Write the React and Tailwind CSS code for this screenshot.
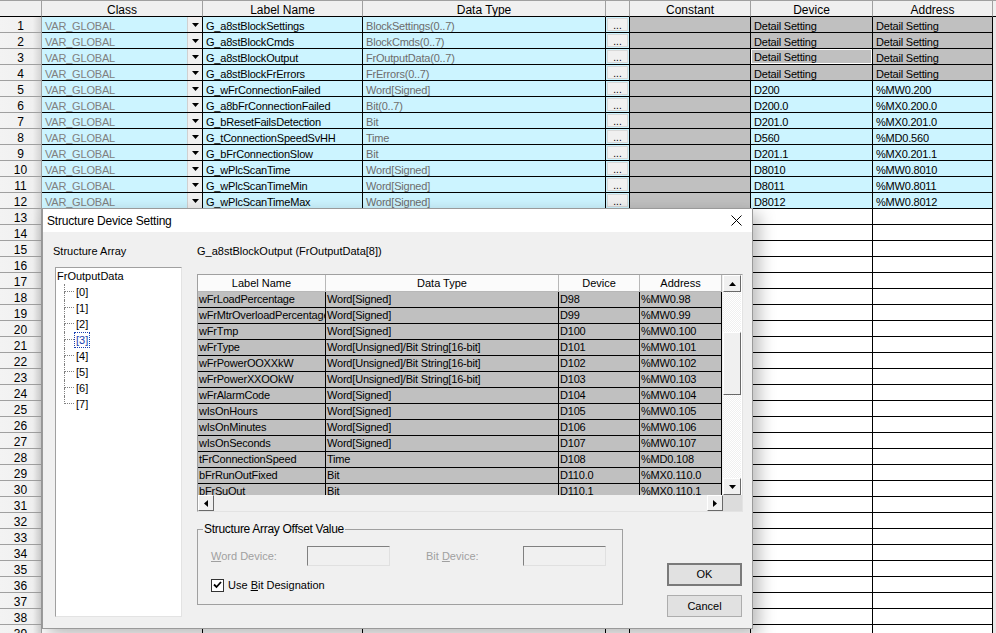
import React from "react";

const COLS = [42, 161, 160, 243, 24, 121, 122, 120, 3];

const ROWS = [
  ["G_a8stBlockSettings", "BlockSettings(0..7)", "Detail Setting", "Detail Setting", true],
  ["G_a8stBlockCmds", "BlockCmds(0..7)", "Detail Setting", "Detail Setting", true],
  ["G_a8stBlockOutput", "FrOutputData(0..7)", "Detail Setting", "Detail Setting", true],
  ["G_a8stBlockFrErrors", "FrErrors(0..7)", "Detail Setting", "Detail Setting", true],
  ["G_wFrConnectionFailed", "Word[Signed]", "D200", "%MW0.200", false],
  ["G_a8bFrConnectionFailed", "Bit(0..7)", "D200.0", "%MX0.200.0", false],
  ["G_bResetFailsDetection", "Bit", "D201.0", "%MX0.201.0", false],
  ["G_tConnectionSpeedSvHH", "Time", "D560", "%MD0.560", false],
  ["G_bFrConnectionSlow", "Bit", "D201.1", "%MX0.201.1", false],
  ["G_wPlcScanTime", "Word[Signed]", "D8010", "%MW0.8010", false],
  ["G_wPlcScanTimeMin", "Word[Signed]", "D8011", "%MW0.8011", false],
  ["G_wPlcScanTimeMax", "Word[Signed]", "D8012", "%MW0.8012", false],
];

const SUB = [
  ["wFrLoadPercentage", "Word[Signed]", "D98", "%MW0.98"],
  ["wFrMtrOverloadPercentage", "Word[Signed]", "D99", "%MW0.99"],
  ["wFrTmp", "Word[Signed]", "D100", "%MW0.100"],
  ["wFrType", "Word[Unsigned]/Bit String[16-bit]", "D101", "%MW0.101"],
  ["wFrPowerOOXXkW", "Word[Unsigned]/Bit String[16-bit]", "D102", "%MW0.102"],
  ["wFrPowerXXOOkW", "Word[Unsigned]/Bit String[16-bit]", "D103", "%MW0.103"],
  ["wFrAlarmCode", "Word[Signed]", "D104", "%MW0.104"],
  ["wIsOnHours", "Word[Signed]", "D105", "%MW0.105"],
  ["wIsOnMinutes", "Word[Signed]", "D106", "%MW0.106"],
  ["wIsOnSeconds", "Word[Signed]", "D107", "%MW0.107"],
  ["tFrConnectionSpeed", "Time", "D108", "%MD0.108"],
  ["bFrRunOutFixed", "Bit", "D110.0", "%MX0.110.0"],
  ["bFrSuOut", "Bit", "D110.1", "%MX0.110.1"],
];

const SUBW = [128, 233, 81, 82];

function Tri({ dir = "down" }) {
  const pts = {
    down: "0,0 7,0 3.5,4",
    up: "0,4 7,4 3.5,0",
    left: "4,0 4,7 0,3.5",
    right: "0,0 0,7 4,3.5",
  }[dir];
  const w = dir === "left" || dir === "right" ? 4 : 7;
  const h = dir === "left" || dir === "right" ? 7 : 4;
  return (
    <svg width={w} height={h} viewBox={`0 0 ${w} ${h}`}>
      <polygon points={pts} fill="#000" />
    </svg>
  );
}

function RowNum({ n }) {
  return (
    <div
      className="h-[16px] shrink-0 border-r border-b border-[#a0a0a0] bg-[linear-gradient(to_right,#f3f3f3_0%,#f0f0f0_80%,#d4d4d4_100%)] text-[12px] text-black text-center pt-[2px] leading-[14px]"
      style={{ width: COLS[0] }}
    >
      {n}
    </div>
  );
}

const cellText = "pt-[2px] leading-[14px] whitespace-nowrap tracking-[-0.2px]";

function GridRow({ n, r }) {
  const cyan = "bg-[#ccf4ff]";
  if (!r) {
    return (
      <div className="flex">
        <RowNum n={n} />
        {COLS.slice(1, 8).map((w, i) => (
          <div key={i} className="h-[16px] shrink-0 border-r border-b border-black bg-white" style={{ width: w }} />
        ))}
        <div className="h-[16px] shrink-0 bg-[#e8e8e8]" style={{ width: COLS[8] }} />
      </div>
    );
  }
  const [label, type, dev, addr, gray] = r;
  const devBg = gray ? "bg-[#c0c0c0]" : cyan;
  return (
    <div className="flex">
      <RowNum n={n} />
      <div className={`h-[16px] shrink-0 flex border-r border-b border-black ${cyan}`} style={{ width: COLS[1] }}>
        <div className={`flex-1 pl-[3px] text-[#808080] ${cellText}`}>VAR_GLOBAL</div>
        <div className="w-[15px] h-[15px] bg-[#f0f0f0] border-l border-[#d0d0d0] flex items-center justify-center pt-[1px]">
          <Tri dir="down" />
        </div>
      </div>
      <div className={`h-[16px] shrink-0 border-r border-b border-black pl-[3px] text-black overflow-hidden ${cellText} ${cyan}`} style={{ width: COLS[2] }}>
        {label}
      </div>
      <div className={`h-[16px] shrink-0 border-r border-b border-black pl-[3px] text-[#6c6c6c] overflow-hidden ${cellText} ${cyan}`} style={{ width: COLS[3] }}>
        {type}
      </div>
      <div className="h-[16px] shrink-0 border-r border-b border-black bg-[#ccf4ff] p-[1px]" style={{ width: COLS[4] }}>
        <div className="h-full w-full bg-[#f0f0f0] border border-[#d8d8d8] flex items-end justify-center text-[10px] leading-[9px] text-black">...</div>
      </div>
      <div className="h-[16px] shrink-0 border-r border-b border-black bg-[#c0c0c0]" style={{ width: COLS[5] }} />
      <div className={`h-[16px] shrink-0 border-r border-b border-black text-black ${devBg}`} style={{ width: COLS[6] }}>
        {n === 3 ? (
          <div className="h-[15px] border border-white outline outline-1 outline-black pl-[2px] pt-[1px] leading-[13px] whitespace-nowrap tracking-[-0.2px]">{dev}</div>
        ) : (
          <div className={`pl-[3px] ${cellText}`}>{dev}</div>
        )}
      </div>
      <div className={`h-[16px] shrink-0 border-r border-b border-black pl-[3px] text-black ${cellText} ${devBg}`} style={{ width: COLS[7] }}>
        {addr}
      </div>
      <div className="h-[16px] shrink-0 bg-[#e8e8e8]" style={{ width: COLS[8] }} />
    </div>
  );
}

function TreeItem({ label, last, selected }) {
  return (
    <div className="flex h-[16px] pl-[8px]">
      <div className="w-[10px] flex flex-col shrink-0">
        <div className="h-[8px] border-l border-b border-dotted border-[#808080]" />
        <div className={`h-[8px] ${last ? "" : "border-l border-dotted border-[#808080]"}`} />
      </div>
      <div className="flex items-center">
        <span className={`px-[1px] leading-[14px] ${selected ? "border border-dotted border-[#1a3fb0] text-[#1a3fb0]" : "border border-transparent"}`}>
          {label}
        </span>
      </div>
    </div>
  );
}

const raised = "bg-[#f0f0f0] border border-t-white border-l-white border-r-[#696969] border-b-[#696969]";

export default function App() {
  const rows = [];
  for (let i = 1; i <= 39; i++) rows.push(<GridRow key={i} n={i} r={ROWS[i - 1]} />);
  return (
    <div className="relative w-[996px] h-[633px] overflow-hidden bg-white font-['Liberation_Sans',Arial,sans-serif] text-[11px] text-black">
      {/* header */}
      <div className="flex h-[17px] border-t border-[#a0a0a0] bg-[#f0f0f0]">
        {["", "Class", "Label Name", "Data Type", "", "Constant", "Device", "Address", ""].map((h, i) => (
          <div
            key={i}
            className={`h-[16px] shrink-0 text-center pt-[2px] leading-[14px] text-[12px] border-b border-black ${i < 8 ? "border-r border-r-[#a0a0a0]" : ""}`}
            style={{ width: COLS[i] }}
          >
            {h}
          </div>
        ))}
      </div>
      <div className="flex flex-col">{rows}</div>

      {/* Dialog */}
      <div className="absolute left-[42px] top-[208px] w-[711px] h-[421px] border border-[#9a9a9a] bg-[#f0f0f0] shadow-[6px_6px_16px_rgba(0,0,0,0.28)] flex flex-col">
        <div className="h-[23px] bg-white flex items-center justify-between pl-[4px] pr-[10px] shrink-0">
          <span className="text-[12px] tracking-[-0.2px]">Structure Device Setting</span>
          <svg width="11" height="11" viewBox="0 0 11 11">
            <path d="M0.5 0.5 L10.5 10.5 M10.5 0.5 L0.5 10.5" stroke="#000" strokeWidth="1" />
          </svg>
        </div>
        <div className="flex flex-1 pt-[11px]">
          {/* left */}
          <div className="w-[154px] shrink-0 pl-[10px] flex flex-col">
            <div className="h-[16px] leading-[16px]">Structure Array</div>
            <div className="mt-[8px] ml-[2px] w-[127px] h-[350px] bg-white border border-t-[#a0a0a0] border-l-[#a0a0a0] border-r-[#e3e3e3] border-b-[#e3e3e3]">
              <div className="h-[16px] leading-[16px] pl-[1px]">FrOutputData</div>
              {["[0]", "[1]", "[2]", "[3]", "[4]", "[5]", "[6]", "[7]"].map((l, i) => (
                <TreeItem key={l} label={l} last={i === 7} selected={i === 3} />
              ))}
            </div>
          </div>
          {/* right */}
          <div className="flex-1 flex flex-col pr-[10px]">
            <div className="h-[16px] leading-[16px]">G_a8stBlockOutput (FrOutputData[8])</div>
            <div className="mt-[15px] w-[546px] h-[238px] border border-t-[#a0a0a0] border-l-[#a0a0a0] border-r-[#e3e3e3] border-b-[#e3e3e3] bg-white flex flex-col">
              <div className="flex flex-1 min-h-0">
                <div className="w-[524px] flex flex-col overflow-hidden">
                  <div className="flex h-[17px] bg-[#fbfbfb] shrink-0">
                    {[["Label Name", 128], ["Data Type", 233], ["Device", 81], ["Address", 82]].map(([h, w]) => (
                      <div key={h} className="h-[17px] shrink-0 border-r border-b border-[#b8b8b8] text-center pt-[1px] leading-[15px]" style={{ width: w }}>
                        {h}
                      </div>
                    ))}
                  </div>
                  {SUB.map((r, i) => (
                    <div key={i} className="flex h-[16px] shrink-0 bg-[#c0c0c0]">
                      {r.map((c, j) => (
                        <div
                          key={j}
                          className="h-[16px] shrink-0 border-r border-b border-black pl-[1px] leading-[15px] whitespace-nowrap overflow-hidden tracking-[-0.2px]"
                          style={{ width: SUBW[j] }}
                        >
                          {c}
                        </div>
                      ))}
                    </div>
                  ))}
                </div>
                {/* vertical scrollbar */}
                <div className="w-[19px] shrink-0 flex flex-col bg-[repeating-conic-gradient(#f0f0f0_0%_25%,#ffffff_0%_50%)] bg-[length:2px_2px] border-l border-[#f0f0f0]">
                  <div className={`h-[17px] flex items-center justify-center ${raised}`}>
                    <Tri dir="up" />
                  </div>
                  <div className="h-[40px]" />
                  <div className={`h-[63px] ${raised}`} />
                  <div className="flex-1" />
                  <div className={`h-[17px] flex items-center justify-center ${raised}`}>
                    <Tri dir="down" />
                  </div>
                </div>
              </div>
              {/* horizontal scrollbar */}
              <div className="h-[16px] shrink-0 flex bg-[#f0f0f0]">
                <div className={`w-[16px] h-[16px] flex items-center justify-center ${raised}`}>
                  <Tri dir="left" />
                </div>
                <div className="flex-1" />
                <div className={`w-[16px] h-[16px] flex items-center justify-center ${raised}`}>
                  <Tri dir="right" />
                </div>
                <div className="w-[19px] bg-[#dcdcdc]" />
              </div>
            </div>

            <div className="flex mt-[17px] items-start gap-[44px]">
              <div className="w-[426px] h-[76px] border border-[#a0a0a0] pl-[13px] flex flex-col">
                <span className="self-start mt-[-8px] ml-[-8px] px-[1px] bg-[#f0f0f0] leading-[14px] text-[12px] tracking-[-0.3px]">Structure Array Offset Value</span>
                <div className="flex items-center h-[20px] mt-[10px] text-[#a0a0a0]">
                  <span className="w-[96px]"><span className="underline">W</span>ord Device:</span>
                  <div className="w-[83px] h-[20px] bg-[#f0f0f0] border border-t-[#808080] border-l-[#808080] border-r-[#e0e0e0] border-b-[#e0e0e0]" />
                  <span className="ml-[36px] w-[97px]">Bit <span className="underline">D</span>evice:</span>
                  <div className="w-[83px] h-[20px] bg-[#f0f0f0] border border-t-[#808080] border-l-[#808080] border-r-[#e0e0e0] border-b-[#e0e0e0]" />
                </div>
                <div className="flex items-center mt-[12px] h-[14px]">
                  <div className="w-[13px] h-[13px] bg-white border border-[#333] flex items-center justify-center">
                    <svg width="9" height="8" viewBox="0 0 9 8">
                      <path d="M1 3.5 L3.5 6 L8 1" stroke="#000" strokeWidth="1.8" fill="none" />
                    </svg>
                  </div>
                  <span className="ml-[4px]">Use <span className="underline">B</span>it Designation</span>
                </div>
              </div>
              <div className="flex flex-col gap-[9px] mt-[34px]">
                <div className="w-[75px] h-[23px] bg-[#e1e1e1] border-2 border-[#7a7a7a] flex items-center justify-center">OK</div>
                <div className="w-[75px] h-[22px] bg-[#e1e1e1] border border-[#adadad] flex items-center justify-center">Cancel</div>
              </div>
            </div>
          </div>
        </div>
      </div>
    </div>
  );
}
